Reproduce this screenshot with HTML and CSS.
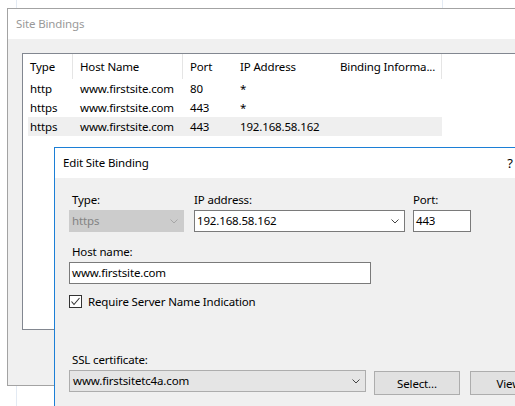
FILE: index.html
```html
<!DOCTYPE html>
<html>
<head>
<meta charset="utf-8">
<link rel="stylesheet" href="styles.css">
</head>
<body>
<div class="desktop">
  <div class="bg-line bg-line-a"></div>
  <div class="bg-line bg-line-b"></div>

  <div class="window site-window">
    <div class="titlebar inactive"><span class="title">Site Bindings</span></div>
    <div class="win-body site-body">
      <div class="listview">
        <div class="lv-header">
          <div class="hcell c1 sep">Type</div>
          <div class="hcell c2 sep">Host Name</div>
          <div class="hcell c3">Port</div>
          <div class="hcell c4">IP Address</div>
          <div class="hcell c5 sep">Binding Informa...</div>
        </div>
        <div class="lv-row">
          <div class="cell r1">http</div>
          <div class="cell c2">www.firstsite.com</div>
          <div class="cell c3">80</div>
          <div class="cell c4">*</div>
          <div class="cell c5"></div>
        </div>
        <div class="lv-row">
          <div class="cell r1">https</div>
          <div class="cell c2">www.firstsite.com</div>
          <div class="cell c3">443</div>
          <div class="cell c4">*</div>
          <div class="cell c5"></div>
        </div>
        <div class="lv-row selected">
          <div class="cell r1">https</div>
          <div class="cell c2">www.firstsite.com</div>
          <div class="cell c3">443</div>
          <div class="cell c4">192.168.58.162</div>
          <div class="cell c5"></div>
        </div>
      </div>
    </div>
  </div>

  <div class="window edit-window">
    <div class="titlebar">
      <span class="title">Edit Site Binding</span>
      <span class="tb-btn help">?</span>
      <span class="tb-btn close">&#x2715;</span>
    </div>
    <div class="win-body edit-body">
      <div class="row-top">
        <div class="field f-type">
          <label class="lbl indent">Type:</label>
          <div class="combo disabled">
            <span class="combo-text">https</span>
            <svg class="chev" width="8" height="5" viewBox="0 0 8 5"><polyline points="0.5,0.5 4,4 7.5,0.5" fill="none" stroke="#a6a6a6" stroke-width="1"/></svg>
          </div>
        </div>
        <div class="field f-ip">
          <label class="lbl">IP address:</label>
          <div class="combo">
            <span class="combo-text">192.168.58.162</span>
            <svg class="chev" width="8" height="5" viewBox="0 0 8 5"><polyline points="0.5,0.5 4,4 7.5,0.5" fill="none" stroke="#444" stroke-width="1"/></svg>
          </div>
        </div>
        <div class="field f-port">
          <label class="lbl">Port:</label>
          <div class="textbox"><span class="combo-text">443</span></div>
        </div>
      </div>

      <div class="field f-host">
        <label class="lbl indent">Host name:</label>
        <div class="textbox host-box"><span class="combo-text">www.firstsite.com</span></div>
      </div>

      <div class="check-row">
        <span class="checkbox">
          <svg width="11" height="11" viewBox="0 0 11 11"><polyline points="1.5,5.5 4,8.5 9.5,2" fill="none" stroke="#333" stroke-width="1.1"/></svg>
        </span>
        <span class="check-label">Require Server Name Indication</span>
      </div>

      <div class="field f-ssl">
        <label class="lbl indent">SSL certificate:</label>
        <div class="ssl-row">
          <div class="combo ssl-combo">
            <span class="combo-text">www.firstsitetc4a.com</span>
            <svg class="chev" width="8" height="5" viewBox="0 0 8 5"><polyline points="0.5,0.5 4,4 7.5,0.5" fill="none" stroke="#444" stroke-width="1"/></svg>
          </div>
          <button class="btn">Select...</button>
          <button class="btn">View...</button>
        </div>
      </div>
    </div>
  </div>
</div>
</body>
</html>
```

FILE: styles.css
```css
* { box-sizing: border-box; }

html, body {
  margin: 0;
  padding: 0;
  width: 515px;
  height: 406px;
  overflow: hidden;
  background: #ffffff;
  font-family: "Noto Sans", "Liberation Sans", sans-serif;
  font-size: 11.5px;
  letter-spacing: -0.15px;
  color: #000;
}

.desktop {
  position: relative;
  width: 515px;
  height: 406px;
  overflow: hidden;
}

.bg-line {
  position: absolute;
  top: 0;
  bottom: 0;
  width: 1px;
  background: #e3eaf3;
}
.bg-line-a { left: 16px; }
.bg-line-b { left: 442px; }

.window {
  position: absolute;
  display: flex;
  flex-direction: column;
  background: #f0f0f0;
}

.titlebar {
  height: 30px;
  flex: 0 0 30px;
  background: #ffffff;
  display: flex;
  align-items: center;
  padding-left: 8px;
  line-height: 30px;
}
.titlebar.inactive .title { color: #999999; }

.win-body {
  flex: 1;
  background: #f0f0f0;
}

/* Site Bindings */
.site-window {
  left: 7px;
  top: 8px;
  width: 600px;
  height: 378px;
  border: 1px solid #a3a3a3;
}
.site-body {
  padding: 14px 0 0 14px;
}

.listview {
  width: 600px;
  height: 277px;
  border: 1px solid #828790;
  background: #ffffff;
}

.lv-header {
  display: flex;
  height: 25px;
}
.hcell {
  height: 25px;
  line-height: 25px;
  padding-left: 7px;
  white-space: nowrap;
  overflow: hidden;
}
.hcell.sep { border-right: 1px solid #e5e5e5; }
.hcell.c1 { width: 50px; }
.c2 { width: 110px; }
.c3 { width: 50px; }
.c4 { width: 100px; }
.c5 { width: 109px; }

.lv-row {
  display: flex;
  height: 19px;
  line-height: 19px;
  margin-left: 5px;
  width: 414px;
}
.lv-row.selected { background: #efefef; }
.cell {
  padding-left: 7px;
  white-space: nowrap;
  overflow: hidden;
}
.cell.r1 { width: 45px; padding-left: 2px; }

/* Edit Site Binding */
.edit-window {
  left: 54px;
  top: 147px;
  width: 526px;
  height: 300px;
  border: 1px solid #1c7fd6;
}
.tb-btn {
  width: 46px;
  flex: 0 0 46px;
  text-align: center;
  font-size: 13px;
}
.tb-btn.help { margin-left: auto; }

.edit-body {
  padding: 14px 0 0 14px;
}

.row-top {
  display: flex;
}
.field { display: flex; flex-direction: column; }
.f-type { width: 115px; margin-right: 10px; }
.f-ip { width: 211px; margin-right: 8px; }
.f-port { width: 58px; }

.lbl {
  display: block;
  height: 16px;
  line-height: 16px;
  margin-bottom: 2px;
  white-space: nowrap;
}
.lbl.indent { padding-left: 3px; }

.combo, .textbox {
  height: 22px;
  border: 1px solid #7a7a7a;
  background: #ffffff;
  display: flex;
  align-items: center;
  position: relative;
}
.combo-text {
  padding-left: 2px;
  line-height: 20px;
  white-space: nowrap;
}
.chev {
  margin-left: auto;
  margin-right: 5px;
}
.combo.disabled {
  background: #cccccc;
  border-color: #cccccc;
  color: #838383;
}

.f-host { margin-top: 12px; }
.host-box { width: 302px; }

.check-row {
  display: flex;
  align-items: center;
  height: 13px;
  margin-top: 11px;
}
.checkbox {
  width: 13px;
  height: 13px;
  border: 1px solid #333333;
  background: #ffffff;
  display: flex;
  align-items: center;
  justify-content: center;
}
.check-label {
  margin-left: 6px;
  line-height: 13px;
  white-space: nowrap;
}

.f-ssl { margin-top: 44px; }
.ssl-row {
  display: flex;
  align-items: flex-start;
}
.ssl-combo {
  width: 297px;
  background: #e5e5e5;
  border-color: #adadad;
  margin-right: 8px;
}
.ssl-combo .combo-text { padding-left: 3px; }
.btn {
  margin-top: 1px;
  width: 86px;
  height: 24px;
  border: 1px solid #adadad;
  background: #e1e1e1;
  font-family: inherit;
  font-size: 11.5px;
  letter-spacing: -0.15px;
  color: #000;
  padding: 0;
  margin-right: 10px;
}
```
